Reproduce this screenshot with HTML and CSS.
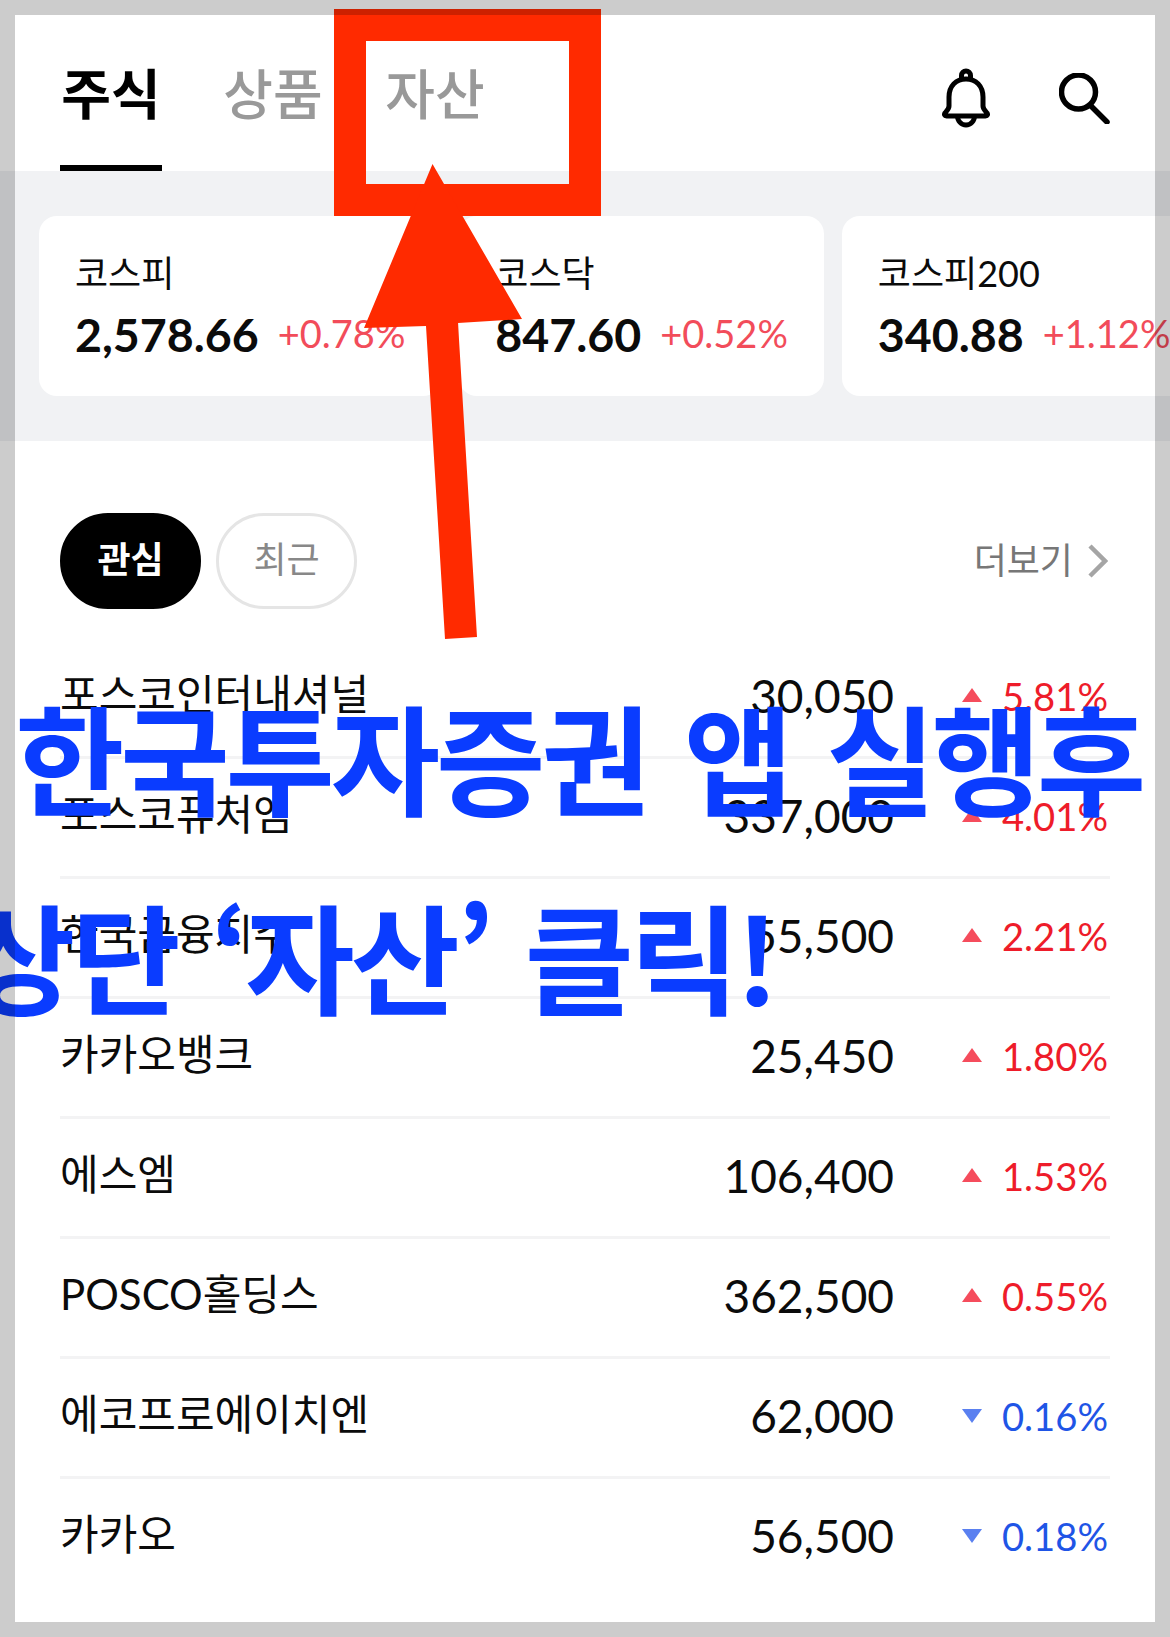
FILE: index.html
```html
<!DOCTYPE html>
<html lang="ko">
<head>
    <meta charset="UTF-8">
    <title>한국투자증권 자산</title>
    <link rel="stylesheet" href="styles.css">
</head>
<body>
    <div class="app">
        <header class="top">
            <nav class="tabs">
                <a class="tab tab-on">주식</a>
                <a class="tab">상품</a>
                <a class="tab">자산</a>
            </nav>
            <div class="top-icons">
                <svg class="ico-bell" viewBox="0 0 48 60" fill="none" stroke="#000" stroke-width="5" stroke-linejoin="round">
                    <path d="M24 11C14 11 7 18 7 29V38C7 41 4.5 43 3 45C2 46.5 2.5 48 4.5 48H43.5C45.5 48 46 46.5 45 45C43.5 43 41 41 41 38V29C41 18 34 11 24 11Z"/>
                    <path d="M19.5 11V7.5a4.5 4.5 0 0 1 9 0V11"/>
                    <path d="M15.5 48a8.5 9 0 0 0 17 0"/>
                </svg>
                <svg class="ico-search" viewBox="0 0 51 51" fill="none" stroke="#000" stroke-width="5.5" stroke-linecap="round">
                    <circle cx="19.5" cy="19" r="17"/>
                    <path d="M32 33L48 49"/>
                </svg>
            </div>
        </header>

        <section class="band">
            <div class="card">
                <div class="card-name">코스피</div>
                <div class="card-nums"><b>2,578.66</b><span>+0.78%</span></div>
            </div>
            <div class="card">
                <div class="card-name">코스닥</div>
                <div class="card-nums"><b>847.60</b><span>+0.52%</span></div>
            </div>
            <div class="card">
                <div class="card-name">코스피200</div>
                <div class="card-nums"><b>340.88</b><span>+1.12%</span></div>
            </div>
        </section>

        <section class="list">
            <div class="list-head">
                <div class="pills">
                    <span class="pill pill-on">관심</span>
                    <span class="pill">최근</span>
                </div>
                <a class="more"><span class="more-label">더보기</span>
                    <svg class="ico-more" viewBox="0 0 20 34" fill="none" stroke="#a5a5a5" stroke-width="4.5"><path d="M2 2L17 17L2 32"/></svg>
                </a>
            </div>

            <div class="row"><span class="name">포스코인터내셔널</span><span class="price">30,050</span><span class="rate up"><i></i>5.81%</span></div>
            <div class="row"><span class="name">포스코퓨처엠</span><span class="price">337,000</span><span class="rate up"><i></i>4.01%</span></div>
            <div class="row"><span class="name">한국금융지주</span><span class="price">55,500</span><span class="rate up"><i></i>2.21%</span></div>
            <div class="row"><span class="name">카카오뱅크</span><span class="price">25,450</span><span class="rate up"><i></i>1.80%</span></div>
            <div class="row"><span class="name">에스엠</span><span class="price">106,400</span><span class="rate up"><i></i>1.53%</span></div>
            <div class="row"><span class="name">POSCO홀딩스</span><span class="price">362,500</span><span class="rate up"><i></i>0.55%</span></div>
            <div class="row"><span class="name">에코프로에이치엔</span><span class="price">62,000</span><span class="rate down"><i></i>0.16%</span></div>
            <div class="row"><span class="name">카카오</span><span class="price">56,500</span><span class="rate down"><i></i>0.18%</span></div>
        </section>
    </div>

    <!-- annotations drawn on top of the screenshot -->
    <div class="mark-box"></div>
    <svg class="mark-arrow" viewBox="0 0 1170 1637"><path d="M432.5 164L522 319L458 323L477 637L445 639L426 326L364 328Z" fill="#ff2a00"/></svg>
    <div class="caption caption-1">한국투자증권 앱 실행후</div>
    <div class="caption caption-2">상단 ‘자산’ 클릭!</div>
    <div class="frame"></div>
</body>
</html>
```

FILE: styles.css
```css
* { box-sizing: border-box; }

html, body {
    margin: 0;
    height: 1637px;
    overflow: hidden;
    background: #fff;
}
body {
    position: relative;
    font-family: "Lato", "Noto Sans CJK KR", sans-serif;
    color: #0b0b0b;
}

/* header */
.top {
    height: 171px;
    padding: 0 60px;
    display: flex;
    justify-content: space-between;
}
.tabs { display: flex; gap: 60px; }
.tab {
    width: 102px;
    height: 171px;
    padding-top: 59px;
    font-size: 54px;
    line-height: 72px;
    font-weight: 500;
    text-align: center;
    color: #999;
}
.tab-on {
    font-weight: 700;
    color: #000;
    border-bottom: 6px solid #000;
}
.top-icons {
    display: flex;
    align-items: center;
    gap: 69px;
    padding-top: 25px;
}
.ico-bell { width: 48px; height: 60px; }
.ico-search { width: 51px; height: 51px; }

/* index cards */
.band {
    height: 270px;
    padding: 45px 0 45px 39px;
    display: flex;
    gap: 18px;
    background: #f1f2f4;
    overflow: hidden;
}
.card {
    flex: none;
    height: 180px;
    padding: 37px 36px 0;
    background: #fff;
    border-radius: 18px;
}
.card-name { font-size: 36px; line-height: 40px; }
.card-nums {
    margin-top: 12px;
    display: flex;
    align-items: center;
    gap: 19px;
    line-height: 56px;
    white-space: nowrap;
}
.card-nums b { font-size: 46.5px; font-weight: 700; }
.card-nums span { font-size: 38px; padding-bottom: 2px; color: #f24c5a; }

/* watch list */
.list { padding: 0 60px; }
.list-head {
    height: 198px;
    padding-top: 72px;
    display: flex;
    justify-content: space-between;
    align-items: flex-start;
}
.pills { display: flex; gap: 15px; }
.pill {
    width: 141px;
    height: 96px;
    padding-bottom: 8px;
    border: 3px solid #e5e5e5;
    border-radius: 48px;
    display: flex;
    align-items: center;
    justify-content: center;
    font-size: 36px;
    color: #888;
}
.pill-on {
    background: #000;
    border-color: #000;
    color: #fff;
    font-weight: 700;
}
.more {
    height: 96px;
    padding-right: 2px;
    display: flex;
    align-items: center;
    gap: 15px;
    font-size: 36px;
    color: #777;
}
.more-label { margin-bottom: 6px; }
.ico-more { width: 20px; height: 34px; }

.row {
    height: 120px;
    padding-bottom: 3px;
    display: flex;
    align-items: center;
    border-bottom: 3px solid #f3f3f4;
}
.row:last-child { border-bottom-color: transparent; }
.name { flex: 1; font-size: 42px; padding-bottom: 10px; }
.price { font-size: 46px; padding-bottom: 2px; }
.rate {
    width: 216px;
    display: flex;
    align-items: center;
    justify-content: flex-end;
    padding-right: 2px;
    font-size: 38.2px;
}
.rate i {
    width: 0;
    height: 0;
    margin-right: 20px;
    border-left: 10.5px solid transparent;
    border-right: 10.5px solid transparent;
}
.up { color: #ee1c2a; }
.up i { margin-bottom: 3px; border-bottom: 14px solid #f54c5c; }
.down { color: #1f55e6; }
.down i { margin-bottom: 1px; border-top: 14px solid #5a80f0; }

/* annotations */
.mark-box {
    position: absolute;
    left: 334px;
    top: 9px;
    width: 267px;
    height: 207px;
    border: 32px solid #ff2a00;
}
.mark-arrow {
    position: absolute;
    left: 0;
    top: 0;
    width: 1170px;
    height: 1637px;
}
.caption {
    position: absolute;
    font-family: "Noto Sans CJK KR", sans-serif;
    font-size: 119px;
    line-height: 130px;
    font-weight: 700;
    letter-spacing: -4.2px;
    word-spacing: 5px;
    color: #0a3cff;
    white-space: nowrap;
}
.caption-1 { left: 15px; top: 690px; word-spacing: 8px; }
.caption-2 { left: -34px; top: 889px; }

.frame {
    position: absolute;
    left: 0;
    top: 0;
    width: 1170px;
    height: 1637px;
    border: 15px solid rgba(0, 0, 0, 0.2);
}
```
